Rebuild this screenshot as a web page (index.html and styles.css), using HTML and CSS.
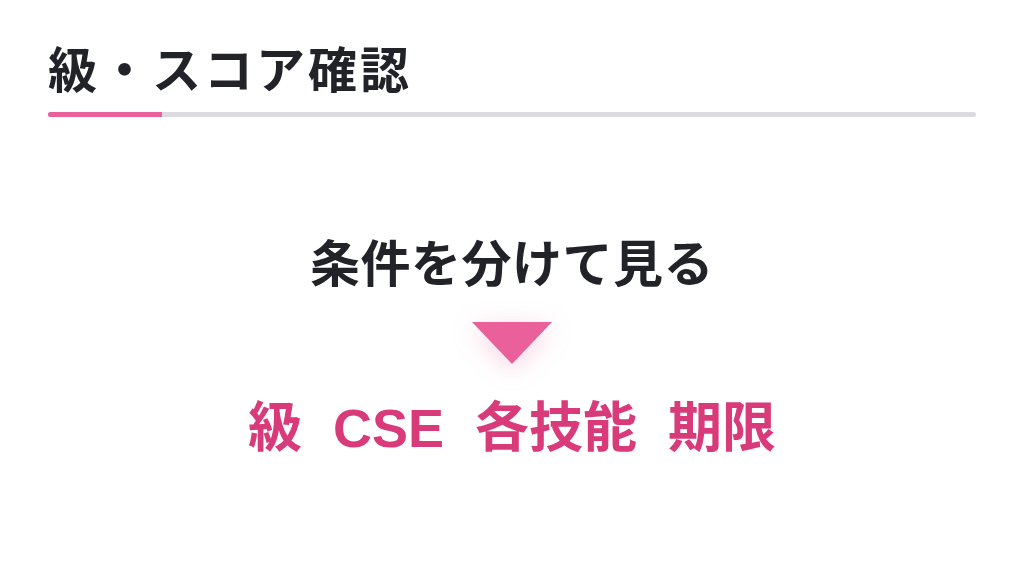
FILE: index.html
```html
<!DOCTYPE html>
<html lang="ja">
<head>
  <meta charset="UTF-8" />
  <title>級・スコア確認</title>
  <link rel="stylesheet" href="styles.css">
</head>
<body>
  <header class="section-head">
    <h1>級・スコア確認</h1>
    <div class="rule"><span class="rule-accent"></span></div>
  </header>

  <main class="flow">
    <p class="lead">条件を分けて見る</p>
    <div class="arrow" aria-hidden="true"></div>
    <p class="terms">
      <span>級</span>
      <span>CSE</span>
      <span>各技能</span>
      <span>期限</span>
    </p>
  </main>
</body>
</html>
```

FILE: styles.css
```css
body {
  margin: 0;
  padding: 0 48px;
  background: #ffffff;
  font-family: "Noto Sans CJK JP", "Noto Sans", sans-serif;
  color: #222328;
}
.section-head {
  padding-top: 33px;
}
.section-head h1 {
  margin: 0;
  font-size: 49px;
  font-weight: 700;
  line-height: 68px;
  letter-spacing: 3px;
}
.rule {
  margin-top: 11px;
  height: 5px;
  border-radius: 3px;
  background: #dcdbe1;
  overflow: hidden;
}
.rule-accent {
  display: block;
  width: 114px;
  height: 100%;
  background: #e9609a;
}
.flow {
  display: flex;
  flex-direction: column;
  align-items: center;
  padding-top: 111px;
}
.lead {
  margin: 0;
  font-size: 50px;
  font-weight: 700;
  line-height: 64px;
  letter-spacing: 0.5px;
}
.arrow {
  margin-top: 30px;
  width: 0;
  height: 0;
  border-left: 40px solid transparent;
  border-right: 40px solid transparent;
  border-top: 42px solid #e9609a;
  filter: drop-shadow(0 6px 12px rgba(233, 96, 154, 0.28));
}
.terms {
  display: flex;
  align-items: baseline;
  gap: 31px;
  margin: 31px 0 0;
  font-family: "Liberation Sans", "Noto Sans CJK JP", sans-serif;
  font-size: 54px;
  font-weight: 700;
  line-height: 66px;
  color: #d83a7a;
}
```
